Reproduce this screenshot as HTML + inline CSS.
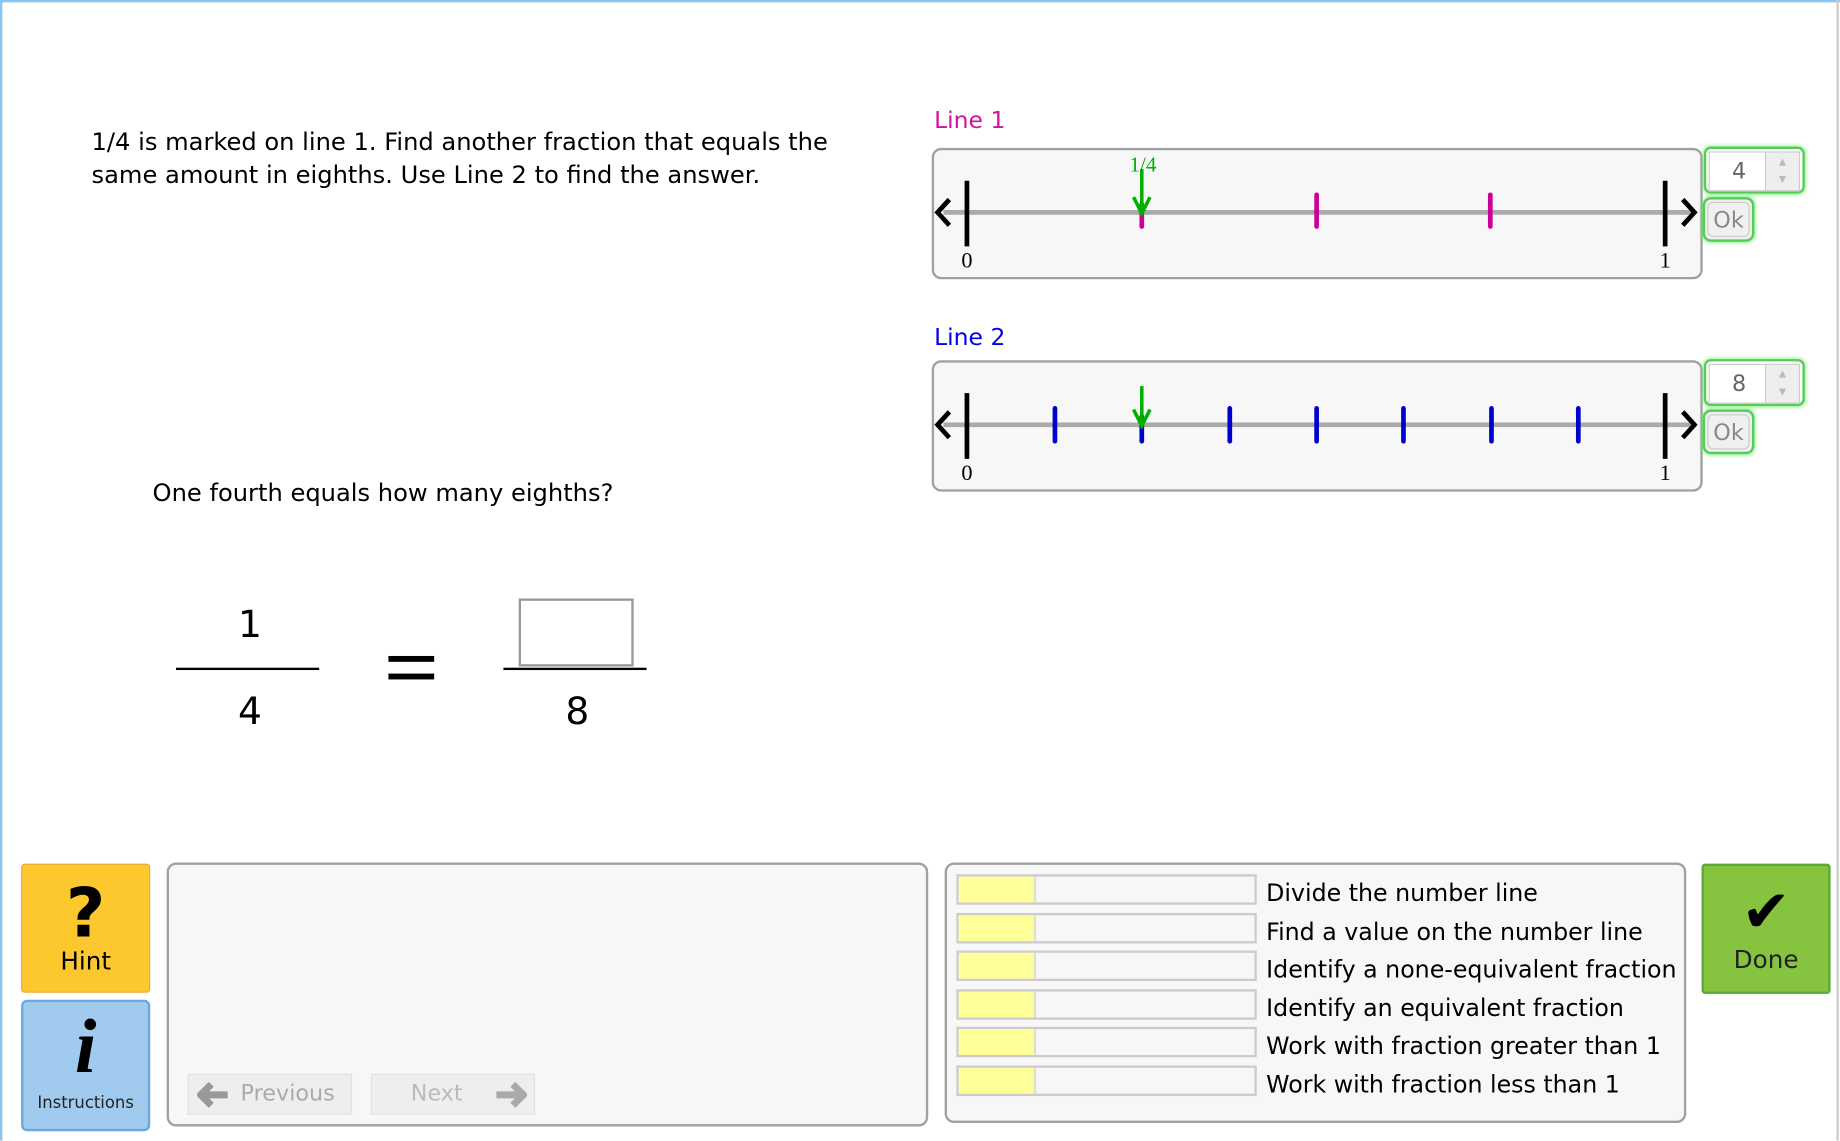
<!DOCTYPE html>
<html><head><meta charset="utf-8"><style>
html,body{margin:0;padding:0;background:#fff;overflow:hidden;}
#w{position:absolute;left:0;top:0;width:1568px;height:972px;transform:scale(1.17347);transform-origin:0 0;font-family:"DejaVu Sans","Liberation Sans",sans-serif;}
.a{position:absolute;}
.box{position:absolute;background:#f7f7f7;border:2px solid #a0a0a0;border-radius:8px;box-sizing:border-box;}
.t{font-size:20.6px;color:#000;white-space:nowrap;}
.spin{position:absolute;width:86px;height:40px;border:2px solid #5c5;border-radius:6px;box-shadow:0 0 4px #6e6;background:#fff;box-sizing:border-box;}
.spin .n{position:absolute;left:2px;top:2px;width:50px;height:32px;background:#fff;border:1px solid #ccc;font-size:19px;color:#666;text-align:center;line-height:32px;}
.spin .b{position:absolute;right:2px;top:2px;width:28px;height:32px;background:#eee;border:1px solid #ccc;font-size:8px;color:#bbb;text-align:center;line-height:15px;}
.ok{position:absolute;width:44px;height:38px;border:2px solid #5c5;border-radius:7px;box-shadow:0 0 4px #6e6;box-sizing:border-box;background:#eee;}
.ok div{position:absolute;left:2px;top:2px;right:2px;bottom:2px;border:1px solid #ccc;border-radius:5px;background:#f0f0f0;font-size:19px;color:#888;text-align:center;line-height:30px;}
.row{position:absolute;left:815px;width:256px;height:26px;border:2px solid #ccc;box-sizing:border-box;background:#f7f7f7;}
.row i{position:absolute;left:0;top:0;width:64px;height:22px;background:#ffff99;border-right:2px solid #ddd;}
.lab{position:absolute;left:1079px;font-size:20.2px;white-space:nowrap;}
</style></head><body><div id="w">
<div class="a" style="left:0;top:0;width:1568px;height:2px;background:#8cc4f0"></div>
<div class="a" style="left:0;top:0;width:2px;height:972px;background:#8cc4f0"></div>
<div class="a" style="left:1565px;top:0;width:2px;height:972px;background:#ccc"></div>

<div class="a t" style="left:78px;top:107px;line-height:28px">1/4 is marked on line 1. Find another fraction that equals the<br>same amount in eighths. Use Line 2 to find the answer.</div>
<div class="a t" style="left:130px;top:408px">One fourth equals how many eighths?</div>
<div class="a" style="left:152px;top:513px;width:122px;text-align:center;font-size:32px">1</div>
<div class="a" style="left:150px;top:569px;width:122px;height:2px;background:#000"></div>
<div class="a" style="left:152px;top:587px;width:122px;text-align:center;font-size:32px">4</div>
<div class="a" style="left:331px;top:559px;width:39px;height:5px;background:#000"></div>
<div class="a" style="left:331px;top:574px;width:39px;height:5px;background:#000"></div>
<div class="a" style="left:442px;top:510px;width:98px;height:58px;border:2px solid #999;box-sizing:border-box;background:#fff"></div>
<div class="a" style="left:429px;top:569px;width:122px;height:2px;background:#000"></div>
<div class="a" style="left:431px;top:587px;width:122px;text-align:center;font-size:32px">8</div>

<div class="a" style="left:796px;top:90px;font-size:20px;color:#d0139f">Line 1</div>
<div class="box" style="left:794px;top:126px;width:657px;height:112px"></div>
<svg class="a" style="left:794px;top:126px" width="660" height="112">
<line x1="10" y1="55" x2="648" y2="55" stroke="#aaa" stroke-width="4"/>
<path d="M15 44 L5 55 L15 66 M640 44 L650 55 L640 66" stroke="#000" stroke-width="4" fill="none"/>
<line x1="30" y1="28" x2="30" y2="84" stroke="#000" stroke-width="4"/>
<line x1="625" y1="28" x2="625" y2="84" stroke="#000" stroke-width="4"/>
<g stroke="#cc0099" stroke-width="4" stroke-linecap="round"><line x1="179" y1="48" x2="179" y2="67"/><line x1="328" y1="40" x2="328" y2="67"/><line x1="476" y1="40" x2="476" y2="67"/></g>
<path d="M179 18 L179 54 M172 42 L179 56 L186 42" stroke="#00b000" stroke-width="3" fill="none"/>
<text x="180" y="20" font-family="Liberation Serif" font-size="18" fill="#00b000" text-anchor="middle">1/4</text>
<text x="30" y="102" font-family="Liberation Serif" font-size="19" text-anchor="middle">0</text>
<text x="625" y="102" font-family="Liberation Serif" font-size="19" text-anchor="middle">1</text>
</svg>
<div class="spin" style="left:1452px;top:125px"><div class="n">4</div><div class="b">▲<br>▼</div></div>
<div class="ok" style="left:1451px;top:168px"><div>Ok</div></div>

<div class="a" style="left:796px;top:275px;font-size:20px;color:#0000ee">Line 2</div>
<div class="box" style="left:794px;top:307px;width:657px;height:112px"></div>
<svg class="a" style="left:794px;top:307px" width="660" height="112">
<line x1="10" y1="55" x2="648" y2="55" stroke="#aaa" stroke-width="4"/>
<path d="M15 44 L5 55 L15 66 M640 44 L650 55 L640 66" stroke="#000" stroke-width="4" fill="none"/>
<line x1="30" y1="28" x2="30" y2="84" stroke="#000" stroke-width="4"/>
<line x1="625" y1="28" x2="625" y2="84" stroke="#000" stroke-width="4"/>
<g stroke="#0000cc" stroke-width="4" stroke-linecap="round"><line x1="105" y1="41" x2="105" y2="69"/><line x1="179" y1="48" x2="179" y2="69"/><line x1="254" y1="41" x2="254" y2="69"/><line x1="328" y1="41" x2="328" y2="69"/><line x1="402" y1="41" x2="402" y2="69"/><line x1="477" y1="41" x2="477" y2="69"/><line x1="551" y1="41" x2="551" y2="69"/></g>
<path d="M179 22 L179 54 M172 42 L179 56 L186 42" stroke="#00b000" stroke-width="3" fill="none"/>
<text x="30" y="102" font-family="Liberation Serif" font-size="19" text-anchor="middle">0</text>
<text x="625" y="102" font-family="Liberation Serif" font-size="19" text-anchor="middle">1</text>
</svg>
<div class="spin" style="left:1452px;top:306px"><div class="n">8</div><div class="b">▲<br>▼</div></div>
<div class="ok" style="left:1451px;top:349px"><div>Ok</div></div>

<div class="a" style="left:18px;top:736px;width:110px;height:110px;background:#fcc82e;border:1px solid #f0a830;border-radius:3px;box-sizing:border-box;text-align:center">
<div style="font-size:58px;font-weight:bold;line-height:58px;margin-top:12px">?</div><div style="font-size:21px;margin-top:0px">Hint</div></div>
<div class="a" style="left:18px;top:852px;width:110px;height:112px;background:#a0cbee;border:2px solid #6fa6dd;border-radius:5px;box-sizing:border-box;text-align:center">
<div style="font-family:'Liberation Serif',serif;font-style:italic;font-weight:bold;font-size:66px;line-height:66px;margin-top:6px">i</div><div style="font-size:14px;color:#222;margin-top:6px">Instructions</div></div>

<div class="box" style="left:142px;top:735px;width:649px;height:225px"></div>
<div class="a" style="left:160px;top:915px;width:138px;height:33px;background:#eee;border:1px solid #e2e2e2;font-size:19px;color:#aaa;line-height:33px">
<svg class="a" style="left:7px;top:6px" width="28" height="22"><path d="M12 2 L3 11 L12 20 M4 11 L26 11" stroke="#999" stroke-width="6" fill="none"/></svg>
<span style="position:absolute;left:44px">Previous</span></div>
<div class="a" style="left:316px;top:915px;width:138px;height:33px;background:#eee;border:1px solid #e2e2e2;font-size:19px;color:#bbb;line-height:33px"><span style="position:absolute;left:33px">Next</span>
<svg class="a" style="left:104px;top:6px" width="28" height="22"><path d="M16 2 L25 11 L16 20 M2 11 L24 11" stroke="#aaa" stroke-width="6" fill="none"/></svg></div>

<div class="box" style="left:805px;top:735px;width:632px;height:222px"></div>
<div class="row" style="top:745px"><i></i></div><div class="lab" style="top:749px">Divide the number line</div>
<div class="row" style="top:778px"><i></i></div><div class="lab" style="top:782px">Find a value on the number line</div>
<div class="row" style="top:810px"><i></i></div><div class="lab" style="top:814px">Identify a none-equivalent fraction</div>
<div class="row" style="top:843px"><i></i></div><div class="lab" style="top:847px">Identify an equivalent fraction</div>
<div class="row" style="top:875px"><i></i></div><div class="lab" style="top:879px">Work with fraction greater than 1</div>
<div class="row" style="top:908px"><i></i></div><div class="lab" style="top:912px">Work with fraction less than 1</div>

<div class="a" style="left:1450px;top:736px;width:110px;height:111px;background:#86c440;border:2px solid #5aa835;border-radius:3px;box-sizing:border-box;text-align:center">
<div style="font-size:50px;line-height:50px;margin-top:14px">✔</div><div style="font-size:21px;color:#222;margin-top:4px">Done</div></div>
</div></body></html>
